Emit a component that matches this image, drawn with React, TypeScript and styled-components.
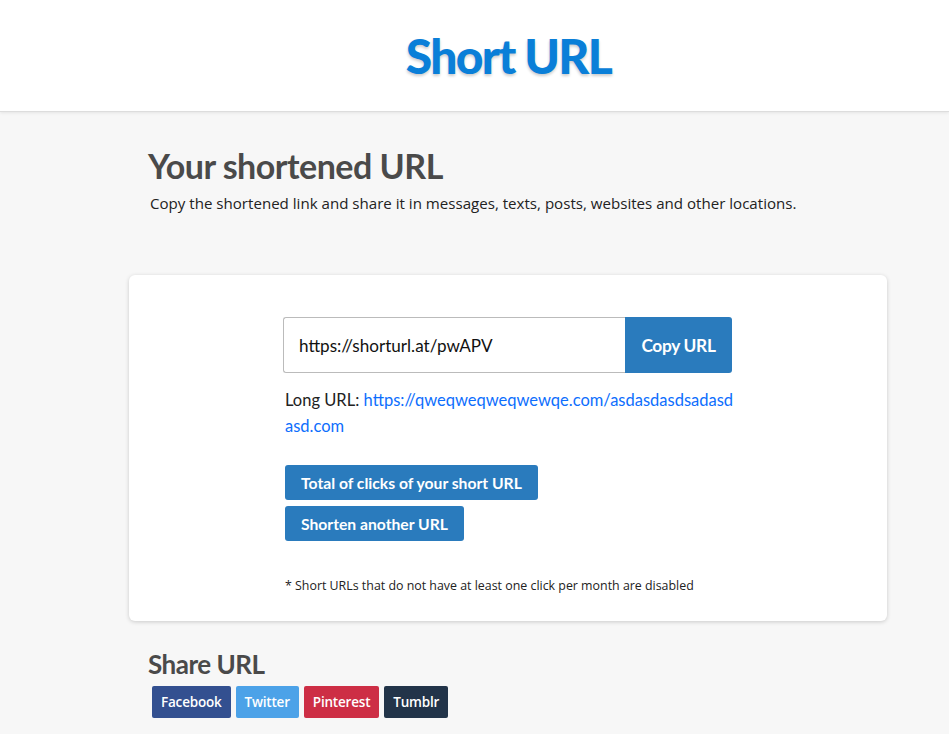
import React from 'react'
import styled, { createGlobalStyle } from 'styled-components'

const GlobalStyle = createGlobalStyle`
  html, body {
    margin: 0;
    padding: 0;
    background: #f7f7f7;
  }
  body {
    font-family: 'Lato', 'Liberation Sans', sans-serif;
    color: #222;
  }
`

const Header = styled.header`
  background: #fff;
  height: 111px;
  border-bottom: 1px solid #ddd;
  box-shadow: 0 1px 3px rgba(0, 0, 0, 0.08);
  display: flex;
  align-items: center;
  justify-content: center;
  padding-left: 66px;
`

const Logo = styled.h1`
  margin: 0 0 0 2px;
  font-family: 'Lato', sans-serif;
  font-weight: 900;
  font-size: 48px;
  letter-spacing: -1.7px;
  color: #0a7fd8;
  text-shadow: 0 2px 3px rgba(0, 0, 0, 0.2);
`

const Main = styled.main`
  width: 758px;
  margin-left: 129px;
  padding-top: 33px;
`

const Intro = styled.section`
  padding: 0 19px;
`

const Heading = styled.h2<{ size: number }>`
  margin: 0;
  font-family: 'Lato', sans-serif;
  font-weight: 700;
  font-size: ${(p) => p.size}px;
  letter-spacing: -0.5px;
  color: #4a4a4a;
`

const Lead = styled.p`
  margin: 7px 0 0 2px;
  font-family: 'Open Sans', sans-serif;
  font-size: 15.1px;
  color: #222;
`

const Card = styled.div`
  margin-top: 62px;
  background: #fff;
  border-radius: 6px;
  box-shadow: 0 1px 4px rgba(0, 0, 0, 0.18);
  padding: 42px 0 27px 154px;
`

const InputGroup = styled.div`
  display: flex;
  width: 449px;
  height: 56px;
`

const UrlInput = styled.input`
  flex: 1;
  min-width: 0;
  box-sizing: border-box;
  border: 1px solid #bbb;
  border-right: none;
  border-radius: 3px 0 0 3px;
  padding: 0 15px;
  font-family: 'Lato', sans-serif;
  font-size: 17.1px;
  color: #111;
  outline: none;
`

const CopyButton = styled.button`
  width: 107px;
  border: none;
  border-radius: 0 3px 3px 0;
  background: #2a7bbd;
  color: #fff;
  font-family: 'Lato', sans-serif;
  font-weight: 700;
  font-size: 17.3px;
  letter-spacing: -0.3px;
`

const LongUrl = styled.p`
  margin: 14px 0 0 2px;
  width: 455px;
  font-family: 'Lato', sans-serif;
  font-size: 16.5px;
  line-height: 26px;
  word-break: break-all;
  color: #222;

  a {
    color: #0d6efd;
    text-decoration: none;
  }
`

const Actions = styled.div`
  margin: 26px 0 0 2px;
  display: flex;
  flex-direction: column;
  align-items: flex-start;
  gap: 6px;
`

const ActionButton = styled.button`
  height: 35px;
  padding: 0 16px;
  border: none;
  border-radius: 3px;
  background: #2a7bbd;
  color: #fff;
  font-family: 'Lato', sans-serif;
  font-weight: 700;
  font-size: 15.7px;
`

const Note = styled.p`
  margin: 36px 0 0 2px;
  font-family: 'Open Sans', sans-serif;
  font-size: 12.4px;
  color: #222;
`

const Share = styled.section`
  padding: 27px 19px 0;
`

const ShareRow = styled.div`
  display: flex;
  gap: 5px;
  margin: 6px 0 0 4px;
`

const ShareButton = styled.button<{ bg: string }>`
  height: 32px;
  padding: 0 9px;
  border: none;
  border-radius: 2px;
  background: ${(p) => p.bg};
  color: #fff;
  font-family: 'Open Sans', sans-serif;
  font-weight: 600;
  font-size: 13.5px;
  letter-spacing: -0.2px;
`

const networks = [
  { name: 'Facebook', bg: '#335090' },
  { name: 'Twitter', bg: '#4ca2e8' },
  { name: 'Pinterest', bg: '#cd2e45' },
  { name: 'Tumblr', bg: '#223449' },
]

export default function App() {
  return (
    <>
      <GlobalStyle />
      <Header>
        <Logo>Short URL</Logo>
      </Header>
      <Main>
        <Intro>
          <Heading size={34}>Your shortened URL</Heading>
          <Lead>
            Copy the shortened link and share it in messages, texts, posts,
            websites and other locations.
          </Lead>
        </Intro>
        <Card>
          <InputGroup>
            <UrlInput readOnly value="https://shorturl.at/pwAPV" />
            <CopyButton>Copy URL</CopyButton>
          </InputGroup>
          <LongUrl>
            Long URL:{' '}
            <a href="#">https://qweqweqweqwewqe.com/asdasdasdsadasdasd.com</a>
          </LongUrl>
          <Actions>
            <ActionButton>Total of clicks of your short URL</ActionButton>
            <ActionButton>Shorten another URL</ActionButton>
          </Actions>
          <Note>
            * Short URLs that do not have at least one click per month are
            disabled
          </Note>
        </Card>
        <Share>
          <Heading size={26}>Share URL</Heading>
          <ShareRow>
            {networks.map((n) => (
              <ShareButton key={n.name} bg={n.bg}>
                {n.name}
              </ShareButton>
            ))}
          </ShareRow>
        </Share>
      </Main>
    </>
  )
}
